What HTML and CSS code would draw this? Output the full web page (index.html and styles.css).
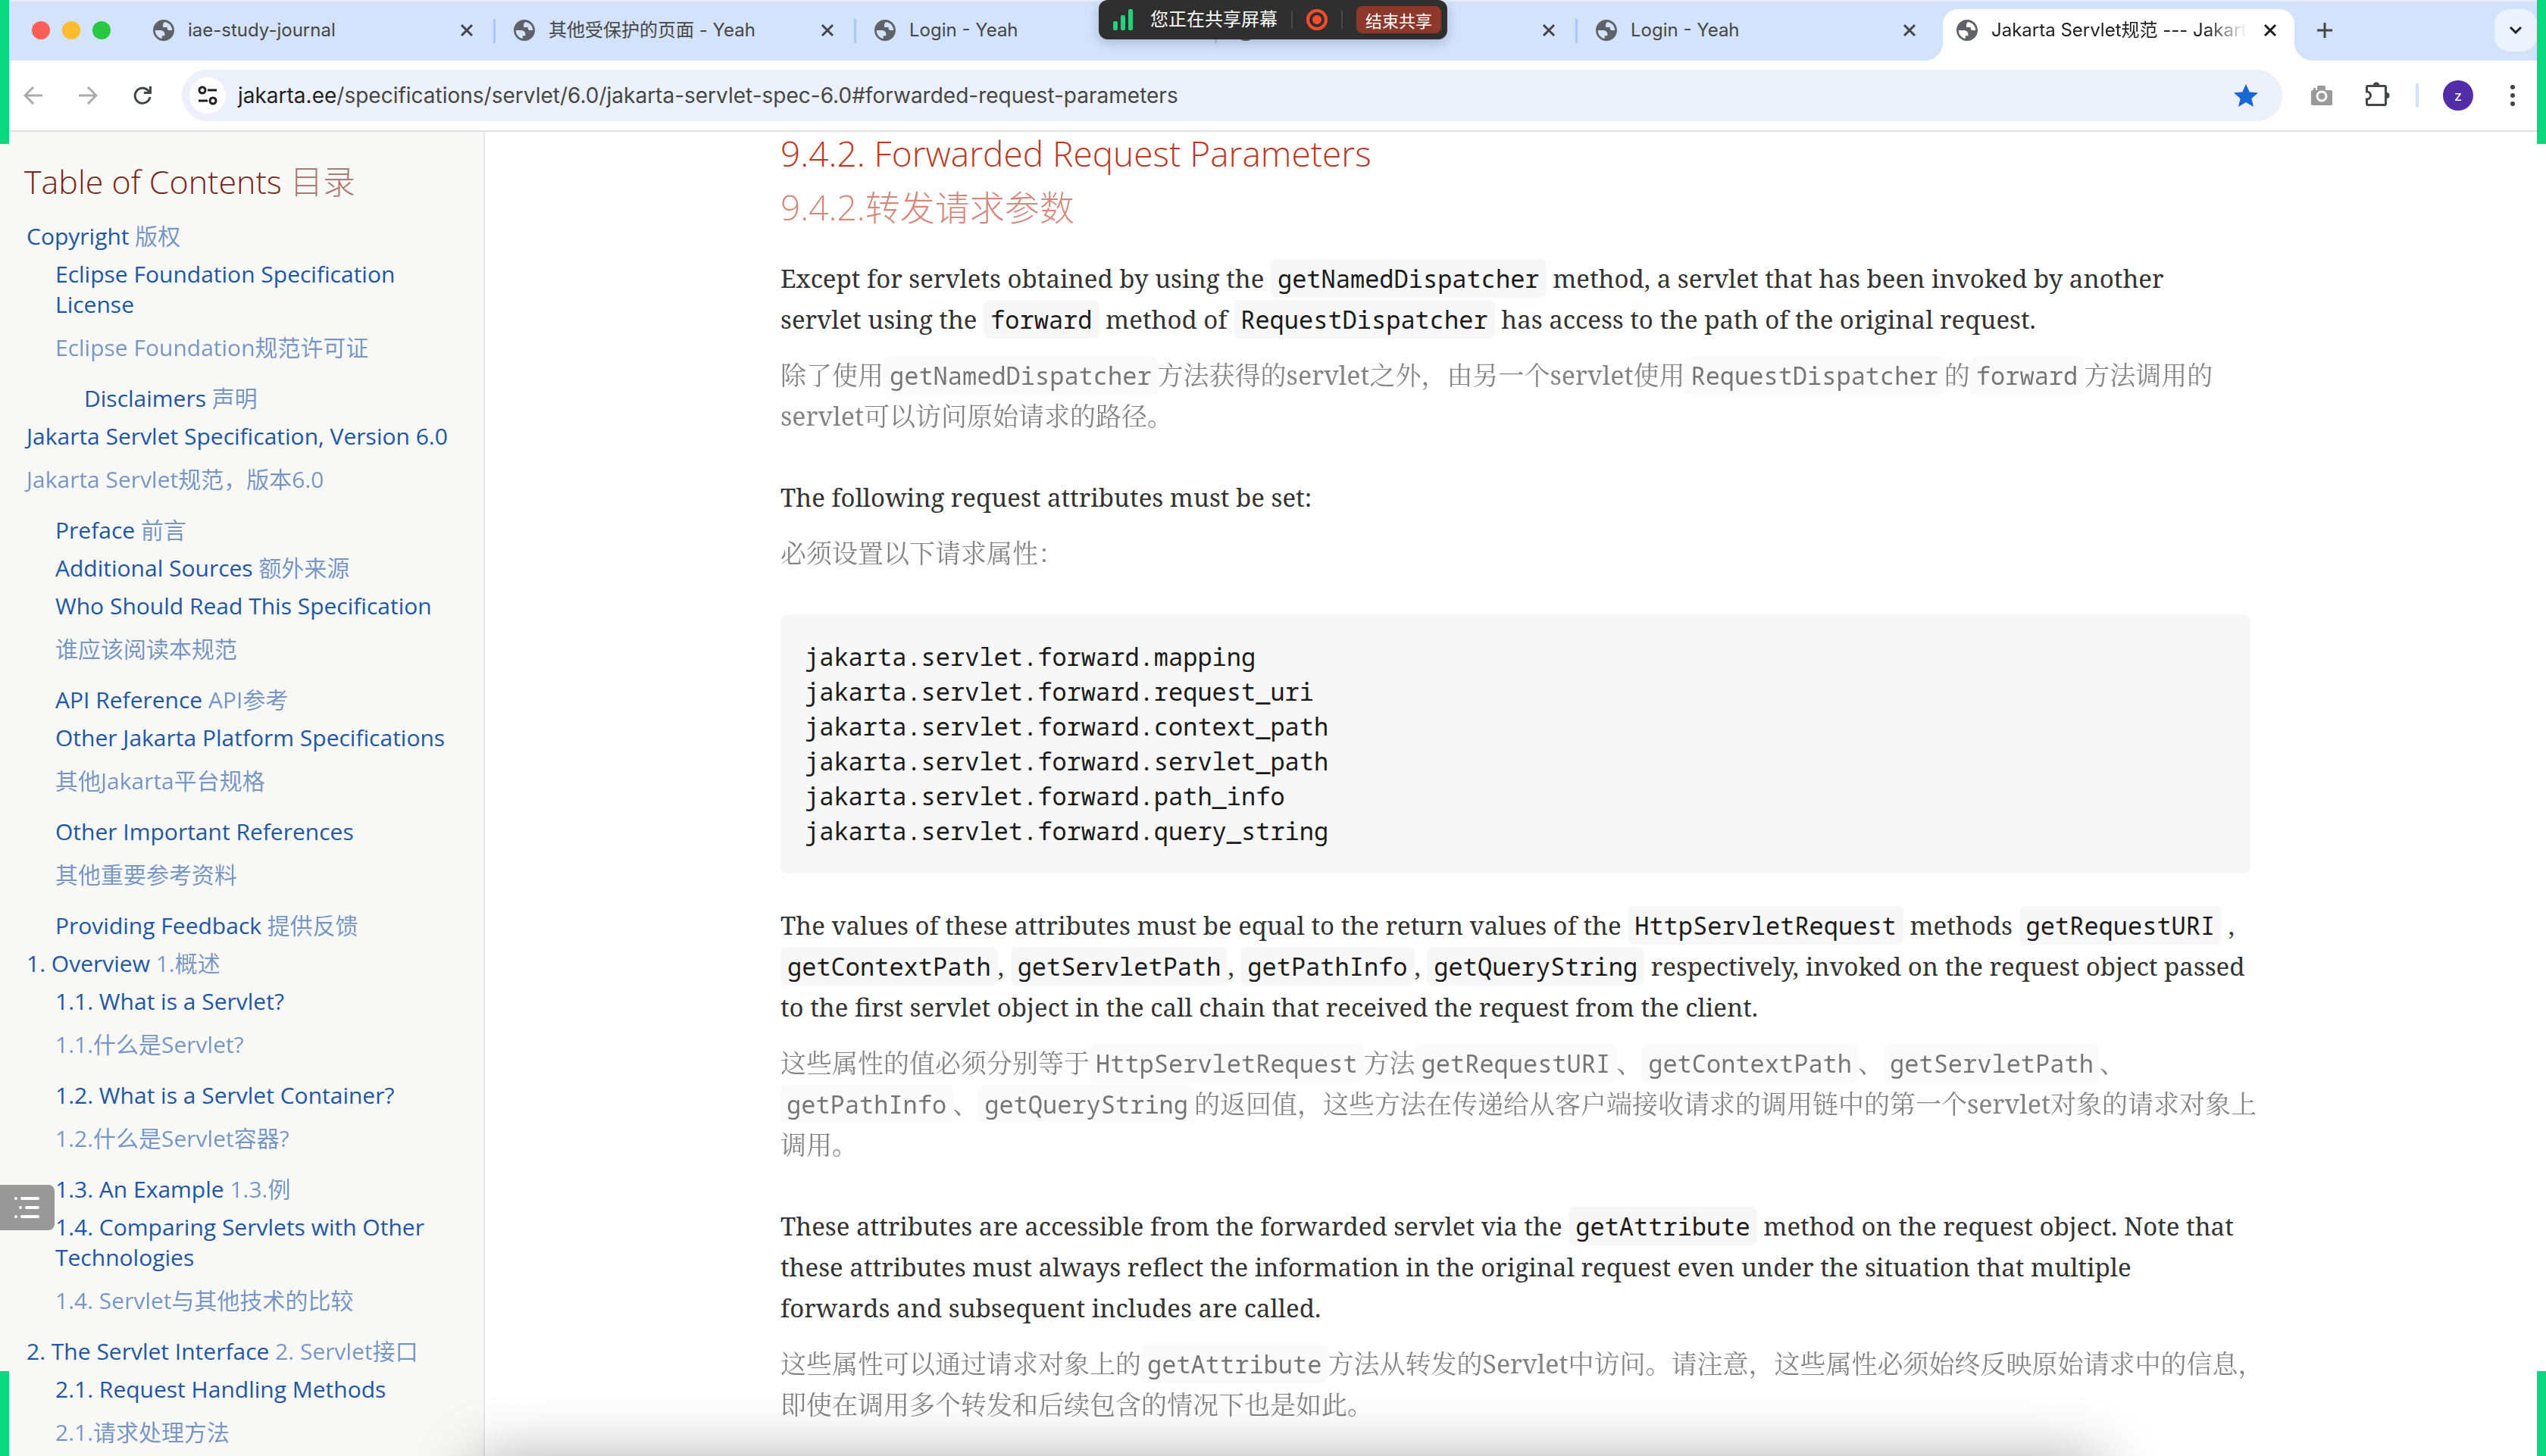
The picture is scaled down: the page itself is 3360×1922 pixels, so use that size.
FILE: index.html
```html
<!DOCTYPE html>
<html lang="zh">
<head>
<meta charset="utf-8">
<title>Jakarta Servlet规范 --- Jakarta EE</title>
<link rel="stylesheet" href="styles.css">
</head>
<body>
<svg class="defs" aria-hidden="true">
  <symbol id="globe" viewBox="2 2 20 20"><path fill="currentColor" d="M12 2C6.480 2 2 6.480 2 12s4.480 10 10 10 10-4.480 10-10S17.520 2 12 2zM4 12h4.400c3.400.02 4.950 1.730 4.600 5.130h-2.570v2.760C6.700 19.200 4 15.900 4 12zm16 0h-3.200c-.75 0-1.400-.65-1.400-1.400V9.200h-4V6.600c0-.9.55-1.700 1.400-2.500C16.900 4.500 20 7.900 20 12z"/></symbol>
  <symbol id="close" viewBox="0 0 18 18"><path d="M2 2l14 14M16 2L2 16" stroke="currentColor" stroke-width="3" fill="none"/></symbol>
</svg>

<header class="browser">
  <div class="tabstrip">
    <div class="lights"><span class="light red"></span><span class="light amber"></span><span class="light lime"></span></div>
    <nav class="tabs" aria-label="Tabs">
      <div class="tab"><svg class="globe"><use href="#globe"/></svg><span class="tab-title">iae-study-journal</span><button class="close" aria-label="Close"><svg><use href="#close"/></svg></button></div>
      <div class="tab"><svg class="globe"><use href="#globe"/></svg><span class="tab-title">其他受保护的页面 - Yeah</span><button class="close" aria-label="Close"><svg><use href="#close"/></svg></button></div>
      <div class="tab"><svg class="globe"><use href="#globe"/></svg><span class="tab-title">Login - Yeah</span></div>
      <div class="tab"><svg class="globe"><use href="#globe"/></svg><span class="tab-title"></span><button class="close" aria-label="Close"><svg><use href="#close"/></svg></button></div>
      <div class="tab"><svg class="globe"><use href="#globe"/></svg><span class="tab-title">Login - Yeah</span><button class="close" aria-label="Close"><svg><use href="#close"/></svg></button></div>
      <div class="tab active"><svg class="globe"><use href="#globe"/></svg><span class="tab-title">Jakarta Servlet规范 --- Jakarta EE</span><button class="close" aria-label="Close"><svg><use href="#close"/></svg></button></div>
    </nav>
    <button class="new-tab" aria-label="New tab"><svg width="22" height="22" viewBox="0 0 22 22"><path d="M11 1v20M1 11h20" stroke="currentColor" stroke-width="3"/></svg></button>
    <button class="tab-search" aria-label="Search tabs"><svg width="18" height="12" viewBox="0 0 18 12"><path d="M2 2l7 7 7-7" fill="none" stroke="currentColor" stroke-width="3"/></svg></button>
  </div>
  <div class="toolbar">
    <button class="nav-btn dim" aria-label="Back"><svg width="26" height="26" viewBox="0 0 26 26"><path d="M25 13H3M13 2L2 13l11 11" fill="none" stroke="currentColor" stroke-width="3"/></svg></button>
    <button class="nav-btn dim" aria-label="Forward"><svg width="26" height="26" viewBox="0 0 26 26"><path d="M1 13h22M13 2l11 11-11 11" fill="none" stroke="currentColor" stroke-width="3"/></svg></button>
    <button class="nav-btn" aria-label="Reload"><svg width="26" height="26" viewBox="0 0 26 26"><path d="M23 15A10 10 0 1 1 20.500 6.500L23 9" fill="none" stroke="currentColor" stroke-width="3"/><path d="M25 1v10H15V8h7V1z" fill="currentColor"/></svg></button>
    <div class="omnibox">
      <button class="site-info" aria-label="Site information"><svg width="26" height="26" viewBox="0 0 26 26" fill="none" stroke="#1f1f1f" stroke-width="3"><circle cx="6" cy="6" r="4"/><path d="M13 6h12M1 20h12"/><circle cx="20" cy="20" r="4"/></svg></button>
      <span class="url"><b>jakarta.ee</b>/specifications/servlet/6.0/jakarta-servlet-spec-6.0#forwarded-request-parameters</span>
      <button class="star" aria-label="Bookmark"><svg width="32" height="30" viewBox="0 0 32 30"><path fill="#1967d2" d="M16 0l4.800 10.600L32 11.500l-8.600 7.400L26 30l-10-6-10 6 2.600-11.100L0 11.500l11.200-.9z"/></svg></button>
    </div>
    <button class="ext camera" aria-label="Capture"><svg width="30" height="28" viewBox="0 0 30 28"><path fill="#9a9a9a" d="M4 7V4h3v3h2V3a2 2 0 0 1 2-2h7a2 2 0 0 1 2 2v4h7a2 2 0 0 1 2 2v16a2 2 0 0 1-2 2H3a2 2 0 0 1-2-2V9a2 2 0 0 1 2-2z"/><circle cx="15" cy="15" r="6" fill="none" stroke="#fff" stroke-width="3"/></svg></button>
    <button class="ext puzzle" aria-label="Extensions"><svg width="36" height="36" viewBox="0 0 36 36"><path d="M7 5.500h22a1.500 1.500 0 0 1 1.500 1.500v22a1.500 1.500 0 0 1-1.500 1.500H7a1.500 1.500 0 0 1-1.500-1.500v-6a5 5 0 0 0 0-10V7a1.500 1.500 0 0 1 1.500-1.500z" fill="none" stroke="#444746" stroke-width="3"/><path d="M14 4.500a4 4 0 0 1 8 0zM31.500 14a4 4 0 0 1 0 8z" fill="#444746"/></svg></button>
    <span class="divider"></span>
    <button class="avatar" aria-label="Profile">z</button>
    <button class="more" aria-label="Menu"><svg width="8" height="30" viewBox="0 0 8 30" fill="#444746"><circle cx="4" cy="4" r="3"/><circle cx="4" cy="15" r="3"/><circle cx="4" cy="26" r="3"/></svg></button>
  </div>
</header>

<main class="page">
  <aside class="toc">
    <h2>Table of Contents <span class="zh">目录</span></h2>
    <ul>
      <li><a href="#c">Copyright <span class="zh">版权</span></a>
        <ul>
          <li><a href="#c1">Eclipse Foundation Specification License <span class="zh block">Eclipse Foundation规范许可证</span></a>
            <ul><li><a href="#c2">Disclaimers <span class="zh">声明</span></a></li></ul>
          </li>
        </ul>
      </li>
      <li><a href="#j">Jakarta Servlet Specification, Version 6.0 <span class="zh block">Jakarta Servlet规范，版本6.0</span></a>
        <ul>
          <li><a href="#j1">Preface <span class="zh">前言</span></a></li>
          <li><a href="#j2">Additional Sources <span class="zh">额外来源</span></a></li>
          <li><a href="#j3">Who Should Read This Specification <span class="zh block">谁应该阅读本规范</span></a></li>
          <li><a href="#j4">API Reference <span class="zh">API参考</span></a></li>
          <li><a href="#j5">Other Jakarta Platform Specifications <span class="zh block">其他Jakarta平台规格</span></a></li>
          <li><a href="#j6">Other Important References <span class="zh block">其他重要参考资料</span></a></li>
          <li><a href="#j7">Providing Feedback <span class="zh">提供反馈</span></a></li>
        </ul>
      </li>
      <li><a href="#o">1. Overview <span class="zh">1.概述</span></a>
        <ul>
          <li><a href="#o1">1.1. What is a Servlet? <span class="zh block">1.1.什么是Servlet?</span></a></li>
          <li><a href="#o2">1.2. What is a Servlet Container? <span class="zh block">1.2.什么是Servlet容器?</span></a></li>
          <li><a href="#o3">1.3. An Example <span class="zh">1.3.例</span></a></li>
          <li><a href="#o4">1.4. Comparing Servlets with Other Technologies <span class="zh block">1.4. Servlet与其他技术的比较</span></a></li>
        </ul>
      </li>
      <li><a href="#s">2. The Servlet Interface <span class="zh">2. Servlet接口</span></a>
        <ul>
          <li><a href="#s1">2.1. Request Handling Methods <span class="zh block">2.1.请求处理方法</span></a></li>
        </ul>
      </li>
    </ul>
  </aside>

  <article class="content">
    <h3>9.4.2. Forwarded Request Parameters <span class="zh block">9.4.2.转发请求参数</span></h3>
    <p>Except for servlets obtained by using the <code>getNamedDispatcher</code> method, a servlet that has been invoked by another<br>servlet using the <code>forward</code> method of <code>RequestDispatcher</code> has access to the path of the original request.</p>
    <p class="trans">除了使用<code>getNamedDispatcher</code>方法获得的servlet之外，由另一个servlet使用<code>RequestDispatcher</code>的<code>forward</code>方法调用的<br>servlet可以访问原始请求的路径。</p>
    <p>The following request attributes must be set:</p>
    <p class="trans">必须设置以下请求属性：</p>
    <pre>jakarta.servlet.forward.mapping
jakarta.servlet.forward.request_uri
jakarta.servlet.forward.context_path
jakarta.servlet.forward.servlet_path
jakarta.servlet.forward.path_info
jakarta.servlet.forward.query_string</pre>
    <p>The values of these attributes must be equal to the return values of the <code>HttpServletRequest</code> methods <code>getRequestURI</code> ,<br><code>getContextPath</code>, <code>getServletPath</code>, <code>getPathInfo</code>, <code>getQueryString</code> respectively, invoked on the request object passed<br>to the first servlet object in the call chain that received the request from the client.</p>
    <p class="trans">这些属性的值必须分别等于<code>HttpServletRequest</code>方法<code>getRequestURI</code>、<code>getContextPath</code>、<code>getServletPath</code>、<br><code>getPathInfo</code>、<code>getQueryString</code>的返回值，这些方法在传递给从客户端接收请求的调用链中的第一个servlet对象的请求对象上<br>调用。</p>
    <p>These attributes are accessible from the forwarded servlet via the <code>getAttribute</code> method on the request object. Note that<br>these attributes must always reflect the information in the original request even under the situation that multiple<br>forwards and subsequent includes are called.</p>
    <p class="trans">这些属性可以通过请求对象上的<code>getAttribute</code>方法从转发的Servlet中访问。请注意，这些属性必须始终反映原始请求中的信息，<br>即使在调用多个转发和后续包含的情况下也是如此。</p>
  </article>
</main>

<button class="outline-toggle" aria-label="Outline"><svg width="34" height="30" viewBox="0 0 34 30" stroke="#fff" stroke-width="4" stroke-linecap="round"><path d="M2 3h0M10 3h21M8 15h0M16 15h15M2 27h0M10 27h21"/></svg></button>

<div class="share-bar">
  <svg width="26" height="28" viewBox="0 0 26 28" fill="#26d07c"><rect y="16" width="6" height="12" rx="2"/><rect x="10" y="8" width="6" height="20" rx="2"/><rect x="20" width="6" height="28" rx="2"/></svg>
  <span class="share-text">您正在共享屏幕</span>
  <span class="share-sep"></span>
  <svg width="28" height="28" viewBox="0 0 28 28"><circle cx="14" cy="14" r="12" fill="none" stroke="#ff4c2b" stroke-width="4"/><circle cx="14" cy="14" r="6" fill="#ff4c2b"/></svg>
  <span class="share-sep"></span>
  <button class="stop">结束共享</button>
</div>
<span class="frame top left"></span><span class="frame top right"></span>
<span class="frame bottom left"></span><span class="frame bottom right"></span>
<span class="dock-shadow"></span>
</body>
</html>
```
FILE: styles.css
```css
* { box-sizing: border-box; }
body {
  margin: 0;
  height: 100vh;
  display: flex;
  flex-direction: column;
  position: relative;
  overflow: hidden;
  background: #fff;
  font-family: Inter, "Noto Sans CJK SC", sans-serif;
}
button { border: 0; padding: 0; background: none; color: inherit; font: inherit; display: flex; align-items: center; justify-content: center; flex: none; }
svg { display: block; flex: none; }
.defs { position: absolute; width: 0; height: 0; }

/* Browser chrome */
.browser { flex: none; border-bottom: 2px solid #e0e0e0; }
.tabstrip { display: flex; align-items: center; height: 80px; padding: 0 12px 2px 42px; background: #d3e2fd; color: #444746; border-top: 2px solid #e6eefd; }
.lights { display: flex; gap: 16px; width: 136px; }
.light { width: 24px; height: 24px; border-radius: 50%; }
.red { background: #ff5f57; }
.amber { background: #febc2e; }
.lime { background: #28c840; }
.tabs { display: flex; align-self: stretch; flex: 0 1 2856px; }
.tab { flex: 1 1 0; min-width: 0; display: flex; align-items: center; padding: 0 24px; position: relative; }
.tab:not(.active):not(:nth-child(5))::after { content: ""; position: absolute; right: 0; top: 23px; width: 3px; height: 32px; background: #a8c7fa; }
.globe { width: 28px; height: 28px; color: #5f6368; }
.tab-title { flex: 1; min-width: 0; margin: 0 16px 0 18px; overflow: hidden; white-space: nowrap; font-size: 24px; line-height: 36px; }
.close { width: 28px; height: 28px; }
.close svg { width: 18px; height: 18px; }
.active { color: #1f1f1f; }
.active::before { content: ""; position: absolute; left: 6px; right: 6px; top: 10px; bottom: -2px; background: #fff; border-radius: 20px 20px 0 0; }
.active::after {
  content: ""; position: absolute; left: -18px; right: -18px; bottom: -2px; height: 24px;
  background: radial-gradient(circle at 0 0, transparent 24px, #fff 24px) left / 24px 24px no-repeat, radial-gradient(circle at 100% 0, transparent 24px, #fff 24px) right / 24px 24px no-repeat;
}
.active > * { position: relative; z-index: 1; }
.active .tab-title { -webkit-mask-image: linear-gradient(to right, #000 84%, transparent); mask-image: linear-gradient(to right, #000 84%, transparent); }
.new-tab { width: 68px; height: 56px; }
.tab-search { width: 56px; height: 56px; margin-left: auto; border-radius: 20px; background: #ecf2fe; color: #1f1f1f; }

.toolbar { display: flex; align-items: center; height: 92px; padding: 0 20px 0 8px; color: #444746; }
.nav-btn { width: 72px; height: 56px; }
.dim { color: #a9abaa; }
.omnibox { flex: 1; min-width: 0; display: flex; align-items: center; height: 68px; margin: 0 16px; padding: 0 32px 0 10px; border-radius: 34px; background: #ecf0fa; }
.site-info { width: 48px; height: 48px; border-radius: 50%; background: #fff; }
.url { flex: 1; margin-left: 16px; font-size: 28px; line-height: 40px; white-space: nowrap; }
.url b { font-weight: 400; color: #1f1f1f; }
.ext { width: 72px; }
.divider { width: 4px; height: 32px; margin: 0 32px 0 16px; border-radius: 2px; background: #d3e2fd; }
.avatar { width: 40px; height: 40px; border-radius: 50%; background: #512da8; color: #fff; font-size: 18px; }
.more { width: 48px; height: 48px; margin-left: 28px; }

/* Document */
.page { flex: 1; min-height: 0; display: grid; grid-template-columns: 640px 1fr; overflow: hidden; }
.toc { background: #f8f8f7; border-right: 2px solid #e7e7e9; padding: 39px 36px 0 32px; overflow: hidden; font-family: "Open Sans", "Noto Sans CJK SC", sans-serif; }
.toc h2 { margin: 0 0 25px; font-size: 43px; line-height: 54px; font-weight: 300; color: #7a2518; }
.toc ul { margin: 0; padding: 0; list-style: none; font-size: 30px; line-height: 40px; }
.toc > ul { padding-left: 3px; }
.toc li { margin-top: 10px; }
.toc ul ul { padding-left: 38px; }
.toc a { display: block; color: #2156a5; text-decoration: none; }
.zh { opacity: .6; }
h2 .zh, h3 .zh { font-weight: 200; }
.block { display: block; }
.toc .block { padding: 17px 0; }

.content { width: 1940px; margin-left: 390px; color: #333; font-family: "Noto Serif", "DejaVu Serif Condensed", "Noto Serif CJK SC", "Noto Sans CJK SC", serif; font-size: 33px; line-height: 54px; }
.content h3 { margin: 1px 0 40px; font-family: "Open Sans", "Noto Sans CJK SC", sans-serif; font-size: 46px; line-height: 55px; font-weight: 300; color: #ba3925; }
.content h3 .block { margin-top: 16px; }
.content p { margin: 0 0 19px; white-space: nowrap; }
.content .trans { margin-bottom: 54px; font-size: 34px; opacity: .6; }
code, pre { font-family: "Noto Sans Mono", "DejaVu Sans Mono", monospace; font-size: 32px; color: #1a1a1a; background: #f7f7f8; }
code { padding: 4px 9px; border-radius: 8px; line-height: 40px; }
.trans code { padding: 4px 8px; }
pre { margin: 0 0 42px; padding: 33px 32px; border-radius: 8px; line-height: 46px; }

/* Overlays */
.outline-toggle { position: absolute; left: 0; top: 1564px; width: 72px; height: 60px; border-radius: 0 8px 8px 0; background: #989998; }
.share-bar { position: absolute; left: 1450px; top: 0; width: 460px; height: 52px; display: flex; align-items: center; gap: 18px; padding: 0 8px 0 19px; border-radius: 12px; background: #2f2f2f; color: #fff; box-shadow: 0 4px 16px rgba(0, 0, 0, .2); }
.share-text { margin-left: 5px; font-size: 24px; line-height: 36px; }
.share-sep { width: 2px; height: 24px; background: #4a4a4a; }
.stop { width: 112px; height: 36px; border-radius: 8px; background: #8e372b; font-size: 22px; }
.frame { position: absolute; width: 12px; background: #0ad880; }
.top { top: 0; height: 190px; }
.bottom { bottom: 0; height: 112px; }
.left { left: 0; }
.right { right: 0; }
.dock-shadow { position: absolute; left: 630px; right: 590px; bottom: -90px; height: 80px; border-radius: 24px; box-shadow: 0 0 80px 10px rgba(0, 0, 0, .3); }
```
